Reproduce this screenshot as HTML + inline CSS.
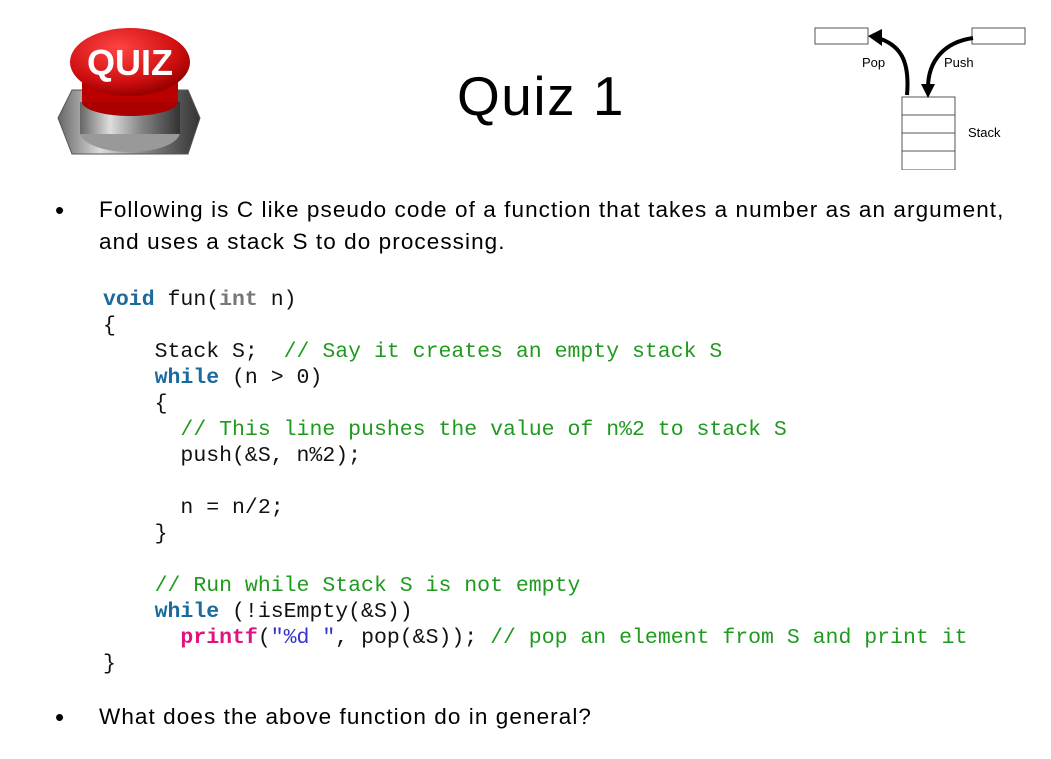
<!DOCTYPE html>
<html><head><meta charset="utf-8"><style>
body{margin:0;width:1051px;height:759px;background:#fff;position:relative;overflow:hidden;font-family:"Liberation Sans",sans-serif;}
.t{position:absolute;white-space:pre;}
.title{left:457px;top:64px;font-size:55px;color:#000;letter-spacing:1.5px;}
.body{font-size:22.5px;color:#000;left:99px;letter-spacing:1.08px;}
.bul{position:absolute;left:55px;font-size:26px;}
.code{position:absolute;left:103px;top:287px;font-family:"Liberation Mono",monospace;font-size:21.5px;line-height:26px;white-space:pre;color:#111;}
.k{color:#1b6a9e;font-weight:bold}
.g{color:#777;font-weight:bold}
.c{color:#1e9a1e}
.p{color:#e0127e;font-weight:bold}
.s{color:#3434d0}
</style></head><body>
<svg style="position:absolute;left:50px;top:20px" width="160" height="150" viewBox="0 0 160 150">
<defs>
<linearGradient id="m" x1="0" x2="1"><stop offset="0" stop-color="#666"/><stop offset=".3" stop-color="#ddd"/><stop offset=".6" stop-color="#888"/><stop offset="1" stop-color="#333"/></linearGradient>
<radialGradient id="r" cx=".4" cy=".3" r=".7"><stop offset="0" stop-color="#f44"/><stop offset=".7" stop-color="#d01010"/><stop offset="1" stop-color="#900"/></radialGradient>
</defs>
<polygon points="22,70 138,70 150,98 138,134 22,134 8,98" fill="url(#m)" stroke="#555"/>
<ellipse cx="80" cy="112" rx="50" ry="20" fill="#999"/>
<rect x="30" y="82" width="100" height="32" fill="url(#m)"/>
<ellipse cx="80" cy="82" rx="48" ry="14" fill="#a00"/>
<rect x="32" y="50" width="96" height="32" fill="#b00"/>
<ellipse cx="80" cy="42" rx="60" ry="34" fill="url(#r)"/>
<text x="80" y="55" font-family="Liberation Sans" font-weight="bold" font-size="36" fill="#fff" text-anchor="middle">QUIZ</text>
</svg>
<div class="t title">Quiz 1</div>
<svg style="position:absolute;left:800px;top:20px" width="240" height="150" viewBox="0 0 240 150">
<rect x="15" y="8" width="53" height="16" fill="#fff" stroke="#555"/>
<rect x="172" y="8" width="53" height="16" fill="#fff" stroke="#555"/>
<rect x="102" y="77" width="53" height="73" fill="#fff" stroke="#555"/>
<line x1="102" y1="95" x2="155" y2="95" stroke="#555"/>
<line x1="102" y1="113" x2="155" y2="113" stroke="#555"/>
<line x1="102" y1="131" x2="155" y2="131" stroke="#555"/>
<path d="M107,75 C110,40 100,25 78,18" fill="none" stroke="#000" stroke-width="4"/>
<polygon points="68,16 82,9 82,26" fill="#000"/>
<path d="M173,18 C145,22 128,40 128,68" fill="none" stroke="#000" stroke-width="4"/>
<polygon points="121,64 135,64 128,78" fill="#000"/>
<text x="62" y="47" font-size="13" font-family="Liberation Sans">Pop</text>
<text x="144" y="47" font-size="13" font-family="Liberation Sans">Push</text>
<text x="168" y="117" font-size="13" font-family="Liberation Sans">Stack</text>
</svg>
<div class="bul" style="top:195px">•</div>
<div class="t body" style="top:197px">Following is C like pseudo code of a function that takes a number as an argument,</div>
<div class="t body" style="top:229px">and uses a stack S to do processing.</div>
<div class="code"><span class="k">void</span> fun(<span class="g">int</span> n)
{
    Stack S;  <span class="c">// Say it creates an empty stack S</span>
    <span class="k">while</span> (n &gt; 0)
    {
      <span class="c">// This line pushes the value of n%2 to stack S</span>
      push(&amp;S, n%2);

      n = n/2;
    }

    <span class="c">// Run while Stack S is not empty</span>
    <span class="k">while</span> (!isEmpty(&amp;S))
      <span class="p">printf</span>(<span class="s">"%d "</span>, pop(&amp;S)); <span class="c">// pop an element from S and print it</span>
}</div>
<div class="bul" style="top:702px">•</div>
<div class="t body" style="top:704px">What does the above function do in general?</div>
</body></html>
